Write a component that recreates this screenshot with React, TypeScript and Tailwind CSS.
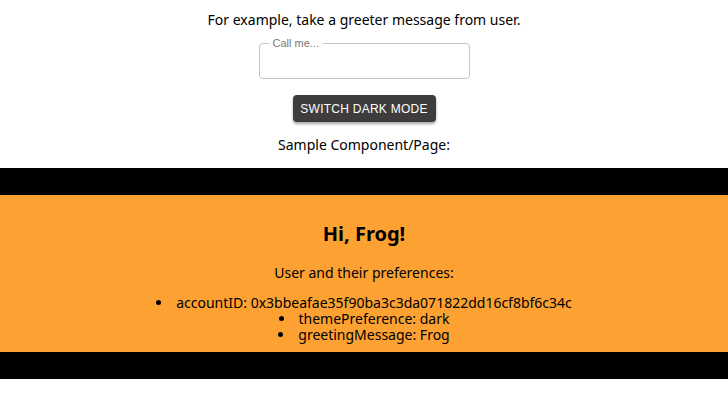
import { useState } from "react";

const USER = {
  accountID: "0x3bbeafae35f90ba3c3da071822dd16cf8bf6c34c",
  themePreference: "dark",
  greetingMessage: "Frog",
};

export default function App() {
  const [name, setName] = useState("");

  return (
    <div className="min-h-screen bg-white text-black font-['Noto_Sans',sans-serif]">
      {/* greeter input */}
      <div className="flex flex-col items-center pt-[10px]">
        <p className="text-[14px] leading-[20px]">
          For example, take a greeter message from user.
        </p>

        <div className="relative mt-[13px] w-[211px] h-[36px] rounded-[4px] border border-[#c4c4c4]">
          <span className="absolute left-[9px] top-[-7px] bg-white px-[4px] text-[11px] leading-[12px] text-[#777] font-['Liberation_Sans',sans-serif]">
            Call me...
          </span>
          <input
            value={name}
            onChange={(e) => setName(e.target.value)}
            className="w-full h-full bg-transparent px-[12px] text-[14px] outline-none"
          />
        </div>

        <button className="mt-[16px] w-[143px] h-[27px] rounded-[4px] bg-[#3e3c3c] text-[12px] text-white tracking-[0.25px] shadow-[0_2px_3px_rgba(0,0,0,0.35)] font-['Liberation_Sans',sans-serif]">
          SWITCH DARK MODE
        </button>

        <p className="mt-[13px] text-[14px] leading-[20px]">
          Sample Component/Page:
        </p>
      </div>

      {/* sample page */}
      <div className="mt-[13px] border-y-[27px] border-black bg-[#fda232]">
        <div className="flex flex-col items-center pt-[25px] pb-[9px]">
          <h1 className="text-[20px] leading-[28px] font-bold">
            Hi, {USER.greetingMessage}!
          </h1>
          <p className="mt-[15px] text-[14px] leading-[20px]">
            User and their preferences:
          </p>
          <ul className="mt-[12px] list-disc list-inside text-center text-[14px] leading-[16px]">
            <li>accountID: {USER.accountID}</li>
            <li>themePreference: {USER.themePreference}</li>
            <li>greetingMessage: {USER.greetingMessage}</li>
          </ul>
        </div>
      </div>
    </div>
  );
}
